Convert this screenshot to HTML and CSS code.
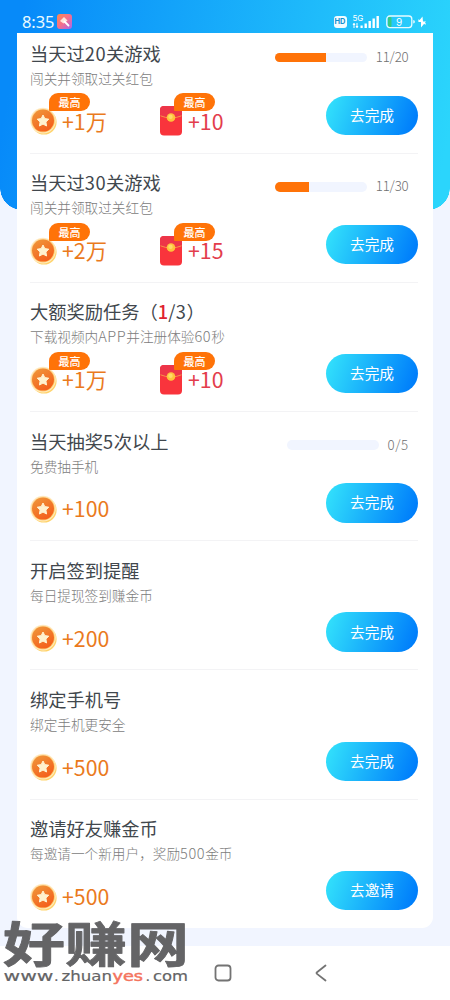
FILE: index.html
```html
<!DOCTYPE html>
<html lang="zh-CN">
<head>
<meta charset="utf-8">
<title>任务</title>
<link rel="stylesheet" href="styles.css">
</head>
<body>
<svg class="defs" width="0" height="0">
  <defs>
    <linearGradient id="rim" x1="0" y1="0" x2="1" y2="1"><stop offset="0" stop-color="#ffd9a0"/><stop offset="1" stop-color="#ffc95c"/></linearGradient>
    <linearGradient id="face" x1="0" y1="0" x2=".6" y2="1"><stop offset="0" stop-color="#ef9a3c"/><stop offset="1" stop-color="#f4601c"/></linearGradient>
    <linearGradient id="app" x1="0" y1="0" x2="1" y2="1"><stop offset="0" stop-color="#ff8a4c"/><stop offset=".5" stop-color="#f56f8c"/><stop offset="1" stop-color="#a568ef"/></linearGradient>
    <symbol id="coin" viewBox="0 0 27 28">
      <circle cx="14" cy="15" r="12.6" fill="#ffd36b"/>
      <circle cx="13" cy="13.6" r="12.8" fill="#ffebc4"/>
      <circle cx="13" cy="13.6" r="11.9" fill="url(#rim)"/>
      <circle cx="13" cy="13.6" r="11" fill="url(#face)"/>
      <path d="M13 8l1.800 3.600 4 .6-2.900 2.800.7 4-3.600-1.900L9.400 19l.7-4-2.900-2.800 4-.6z" fill="#fff2cf" stroke="#fff2cf" stroke-width="1" stroke-linejoin="round"/>
    </symbol>
    <symbol id="packet" viewBox="0 0 22 30">
      <rect width="22" height="29.500" rx="4" fill="#f9343c"/>
      <path d="M0 10V4A4 4 0 0 1 4 0h14A4 4 0 0 1 22 4V10Q11 14 0 10z" fill="#ed3548"/>
      <path d="M.5 9.800Q11 14.200 21.500 9.800" fill="none" stroke="#f79446" stroke-width="1"/>
      <circle cx="11" cy="11.500" r="4.300" fill="#ffc23b"/>
      <circle cx="10.500" cy="10.800" r="2.200" fill="#ffda68"/>
    </symbol>
  </defs>
</svg>
<div class="screen">
  <header class="status">
    <span class="clock">8:35</span>
    <svg class="app-icon" width="15" height="15" viewBox="0 0 15 15"><rect width="15" height="15" rx="3" fill="url(#app)"/><path d="M3 7l4-4 3.500 3.500-4 3z" fill="#ffe4d8"/><path d="M7.500 7.500l4 4" stroke="#fff" stroke-width="1.800" stroke-linecap="round"/></svg>
    <span class="hd">HD</span>
    <svg class="signal" width="28" height="15" viewBox="0 0 28 15" fill="#fff"><text x="0.500" y="7" class="net">5G</text><path d="M2 9v5M5 14V9" stroke="#fff" stroke-width="1"/><path d="M0.500 11L2 9l1.500 2zM3.500 12L5 14l1.500-2z"/><rect x="8.500" y="11.500" width="2.200" height="2.500"/><rect x="12.500" y="9.500" width="2.400" height="4.500"/><rect x="16.500" y="7" width="2.400" height="7"/><rect x="20.500" y="4.500" width="2.400" height="9.500"/><rect x="24.500" y="2" width="2.400" height="12"/></svg>
    <svg class="battery" width="40" height="14" viewBox="0 0 40 14"><rect x="2" y="2" width="3.500" height="10" rx="1" fill="#35c985"/><rect x=".8" y="1" width="25" height="11.600" rx="3" fill="none" stroke="#e8fbff" stroke-width="1.300"/><text x="13" y="10.500" class="level">9</text><path d="M27.300 5q1.500 0 1.500 1.800t-1.500 1.800z" fill="#fff"/><path d="M36.500 1.500L32 7h3v5.500L40 6.500h-3z" fill="#fff"/><path d="M32 5l2 .5M38 8.500l2 .5" stroke="#fff"/></svg>
  </header>
  <main class="card">
    <section class="task">
      <div class="info"><h2>当天过<span class="num">20</span>关游戏</h2><p>闯关并领取过关红包</p>
        <div class="rewards">
          <div class="reward"><svg class="coin"><use href="#coin"/></svg><b>+1万</b><i>最高</i></div>
          <div class="reward red"><svg class="packet"><use href="#packet"/></svg><b>+10</b><i>最高</i></div>
        </div></div>
      <div class="side"><div class="progress"><div class="bar"><div class="fill" style="width:55%"></div></div><span>11/20</span></div><button>去完成</button></div>
    </section>
    <section class="task">
      <div class="info"><h2>当天过<span class="num">30</span>关游戏</h2><p>闯关并领取过关红包</p>
        <div class="rewards">
          <div class="reward"><svg class="coin"><use href="#coin"/></svg><b>+2万</b><i>最高</i></div>
          <div class="reward red"><svg class="packet"><use href="#packet"/></svg><b>+15</b><i>最高</i></div>
        </div></div>
      <div class="side"><div class="progress"><div class="bar"><div class="fill" style="width:36.7%"></div></div><span>11/30</span></div><button>去完成</button></div>
    </section>
    <section class="task">
      <div class="info"><h2>大额奖励任务（<em>1</em><span class="num">/3</span>）</h2><p>下载视频内<span class="latin">APP</span>并注册体验<span class="latin">60</span>秒</p>
        <div class="rewards">
          <div class="reward"><svg class="coin"><use href="#coin"/></svg><b>+1万</b><i>最高</i></div>
          <div class="reward red"><svg class="packet"><use href="#packet"/></svg><b>+10</b><i>最高</i></div>
        </div></div>
      <div class="side"><div class="progress"></div><button>去完成</button></div>
    </section>
    <section class="task">
      <div class="info"><h2>当天抽奖<span class="num">5</span>次以上</h2><p>免费抽手机</p>
        <div class="rewards"><div class="reward"><svg class="coin"><use href="#coin"/></svg><b>+100</b></div></div></div>
      <div class="side"><div class="progress"><div class="bar"></div><span class="short">0/5</span></div><button>去完成</button></div>
    </section>
    <section class="task">
      <div class="info"><h2>开启签到提醒</h2><p>每日提现签到赚金币</p>
        <div class="rewards"><div class="reward"><svg class="coin"><use href="#coin"/></svg><b>+200</b></div></div></div>
      <div class="side"><div class="progress"></div><button>去完成</button></div>
    </section>
    <section class="task">
      <div class="info"><h2>绑定手机号</h2><p>绑定手机更安全</p>
        <div class="rewards"><div class="reward"><svg class="coin"><use href="#coin"/></svg><b>+500</b></div></div></div>
      <div class="side"><div class="progress"></div><button>去完成</button></div>
    </section>
    <section class="task">
      <div class="info"><h2>邀请好友赚金币</h2><p>每邀请一个新用户，奖励<span class="latin">500</span>金币</p>
        <div class="rewards"><div class="reward"><svg class="coin"><use href="#coin"/></svg><b>+500</b></div></div></div>
      <div class="side"><div class="progress"></div><button>去邀请</button></div>
    </section>
  </main>
  <nav class="navbar">
    <svg width="18" height="18" viewBox="0 0 18 18"><rect x="1.500" y="1.500" width="15" height="15" rx="3" /></svg>
    <svg width="14" height="18" viewBox="0 0 14 18"><path d="M11.500 1.500L3 8.300q-1 .8 0 1.600l8.500 6.600"/></svg>
  </nav>
</div>
<svg class="watermark" width="192" height="70" viewBox="0 0 192 70">
  <g transform="translate(0 43) scale(1 .79)"><text class="brand" x="3" y="0" textLength="186" lengthAdjust="spacingAndGlyphs">好赚网</text></g>
  <g class="url">
    <text x="3.500" y="61.500" textLength="50" lengthAdjust="spacingAndGlyphs">www</text>
    <text x="54" y="61.500">.</text>
    <text x="61.500" y="61.500" textLength="50.500" lengthAdjust="spacingAndGlyphs">zhuan</text>
    <text class="yes" x="112.500" y="61.500" textLength="30.500" lengthAdjust="spacingAndGlyphs">yes</text>
    <text x="145.500" y="61.500">.</text>
    <text x="153" y="61.500" textLength="35" lengthAdjust="spacingAndGlyphs">com</text>
  </g>
</svg>
</body>
</html>
```
FILE: styles.css
```css
* { box-sizing: border-box; }
body {
  margin: 0;
  font-family: "Noto Sans CJK SC", sans-serif;
  background: #fff;
}
.defs { position: absolute; }
.screen {
  width: 450px;
  height: 1000px;
  display: flex;
  flex-direction: column;
  overflow: hidden;
  background:
    radial-gradient(circle at 22px 0, transparent 21.500px, #f1f5ff 22px) 0 188px / 22px 22px no-repeat,
    radial-gradient(circle at 0 0, transparent 21.500px, #f1f5ff 22px) 428px 188px / 22px 22px no-repeat,
    linear-gradient(100deg, #078af9 5%, #2bd5fc 97%) 0 0 / 450px 210px no-repeat,
    #f1f5ff;
}
.status {
  height: 33.400px;
  flex: none;
  padding: 10px 24.500px 0 22px;
  display: flex;
  align-items: center;
  color: #e9faff;
}
.clock { width: 35px; font: 16.500px/22px "Noto Sans", sans-serif; letter-spacing: -.1px; }
.app-icon { margin-right: auto; }
.hd {
  width: 13px;
  height: 12px;
  margin-right: 5px;
  border-radius: 3px;
  background: #f2fcff;
  color: #1590d0;
  font: bold 7.500px/12px Inter, sans-serif;
  text-align: center;
}
.signal { margin-right: 6px; }
.net { font: 8px Inter, sans-serif; }
.level { font: 10px Inter, sans-serif; fill: #fff; text-anchor: middle; }
.card {
  width: 416px;
  height: 895px;
  margin: 0 17px;
  flex: none;
  overflow: hidden;
  background: #fff;
  border-radius: 0 0 11px 11px;
}
.task {
  height: 129.200px;
  margin: 0 15px 0 13px;
  padding-top: 14.700px;
  display: flex;
  justify-content: space-between;
  border-bottom: 1.500px solid #f3f3f5;
}
.task:first-child { margin-top: -9px; }
.task:last-child { border: 0; }
.info { flex: none; width: 210px; }
h2 {
  margin: 0;
  font-size: 18.250px;
  line-height: 28px;
  font-weight: 400;
  color: #41474d;
  white-space: nowrap;
}
.num { letter-spacing: .5px; }
h2 em { font-style: normal; font-weight: 500; color: #e02230; }
p {
  margin: 1px 0 0;
  font-size: 13.650px;
  line-height: 20px;
  color: #7c7c7c;
  font-weight: 300;
  white-space: nowrap;
}
.latin { font-size: 14.500px; line-height: 1; letter-spacing: .6px; }
.rewards { height: 30px; margin-top: 18.300px; display: flex; }
.reward { position: relative; width: 130px; flex: none; display: flex; align-items: center; }
.coin { width: 27px; height: 28px; margin-right: 5px; }
.packet { width: 22px; height: 30px; margin-right: 6px; }
.reward b { font-weight: 400; font-size: 21.300px; line-height: 30px; color: #ea7a1d; padding-bottom: 1px; }
.red b { color: #e33d4c; }
.reward i {
  position: absolute;
  left: 19px;
  top: -13px;
  width: 41px;
  height: 18px;
  border-radius: 10px 10px 10px 1px;
  background: #ff7308;
  color: #fff;
  font: 500 11px/18px "Noto Sans CJK SC", sans-serif;
  text-align: center;
}
.red i { left: 14px; }
.side { display: flex; flex-direction: column; align-items: flex-end; }
.progress {
  height: 20px;
  margin: 8.500px 9.500px 28px 0;
  display: flex;
  align-items: center;
  gap: 8.500px;
  color: #707070;
  font-size: 13.300px;
  font-weight: 300;
}
.progress span { position: relative; top: -1px; white-space: nowrap; letter-spacing: -.2px; }
.progress .short { letter-spacing: .5px; }
.bar { width: 92px; height: 9.500px; border-radius: 5px; overflow: hidden; background: #f1f5ff; }
.fill { height: 100%; background: #ff7308; }
button {
  width: 92px;
  height: 39.500px;
  padding: 0 0 1px;
  border: 0;
  border-radius: 20px;
  background: linear-gradient(110deg, #30dcfb 8%, #007ffb 92%);
  color: #fff;
  font: 14.700px/38px "Noto Sans CJK SC", sans-serif;
}
.navbar {
  margin-top: auto;
  height: 54px;
  display: flex;
  align-items: center;
  padding-left: 214px;
  gap: 82px;
  background: #fff;
}
.navbar svg { fill: none; stroke: #737373; stroke-width: 1.800; stroke-linecap: round; }
.watermark { position: absolute; left: 0; top: 919px; overflow: visible; }
.brand { font: 700 61px "Noto Sans CJK SC", sans-serif; fill: #646466; stroke: #646466; stroke-width: 1px; stroke-linejoin: round; }
.url { font: 14.500px "DejaVu Sans", sans-serif; fill: #646466; stroke: #646466; stroke-width: .2px; }
.yes { fill: #f4745e; stroke: #f4745e; stroke-width: .5px; }
```
